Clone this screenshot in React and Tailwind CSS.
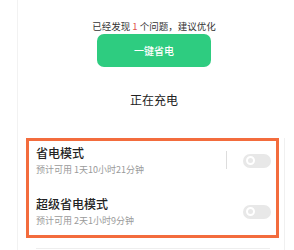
export default function App() {
  const font = { fontFamily: '"Noto Sans CJK SC", "Noto Sans", sans-serif' };
  const Toggle = () => (
    <div className="w-[28px] h-[14px] rounded-full bg-[#e8e8e8] flex items-center pl-[3px]">
      <div className="w-[9px] h-[9px] rounded-full border-[2px] border-white bg-[#e8e8e8]" />
    </div>
  );
  return (
    <div className="w-[294px] h-[250px] bg-white overflow-hidden" style={font}>
      <div className="ml-[17px] h-full border-l border-[#f2f2f2] flex flex-col">
        <div className="w-[272px] flex flex-col items-center">
          <div className="mt-[20px] text-[9.5px] leading-[12px] text-[#333]">
            已经发现 <span className="text-[#e0524a]">1</span> 个问题，建议优化
          </div>
          <button className="mt-[2px] w-[114px] h-[33px] rounded-[7px] bg-[#2ecc80] text-white text-[10px] leading-[33px] font-medium">
            一键省电
          </button>
          <div className="mt-[25px] text-[12px] leading-[16px] text-[#222]">正在充电</div>
        </div>
        <div className="mt-[30px] w-[267px] border-r border-[#f0f0f0] flex-1">
          <div className="ml-[8px] w-[253px] border-[3px] border-[#f36c3d] pl-[7px] pr-[5px] pt-[4px] pb-[8px]">
            <div className="flex items-center">
              <div className="flex-1 flex flex-col">
                <div className="text-[12px] leading-[16px] text-[#222] font-medium">省电模式</div>
                <div className="mt-[3px] text-[9px] leading-[12px] text-[#9a9a9a]">预计可用 1天10小时21分钟</div>
              </div>
              <div className="w-px h-[18px] bg-[#dddddd] mr-[16px] mt-[-2px]" />
              <Toggle />
            </div>
            <div className="flex items-center mt-[20px]">
              <div className="flex-1 flex flex-col">
                <div className="text-[12px] leading-[16px] text-[#222] font-medium">超级省电模式</div>
                <div className="mt-[3px] text-[9px] leading-[12px] text-[#9a9a9a]">预计可用 2天1小时9分钟</div>
              </div>
              <Toggle />
            </div>
          </div>
          <div className="mt-[10px] ml-[18px] w-[234px] h-px bg-[#eeeeee]" />
        </div>
      </div>
    </div>
  );
}
